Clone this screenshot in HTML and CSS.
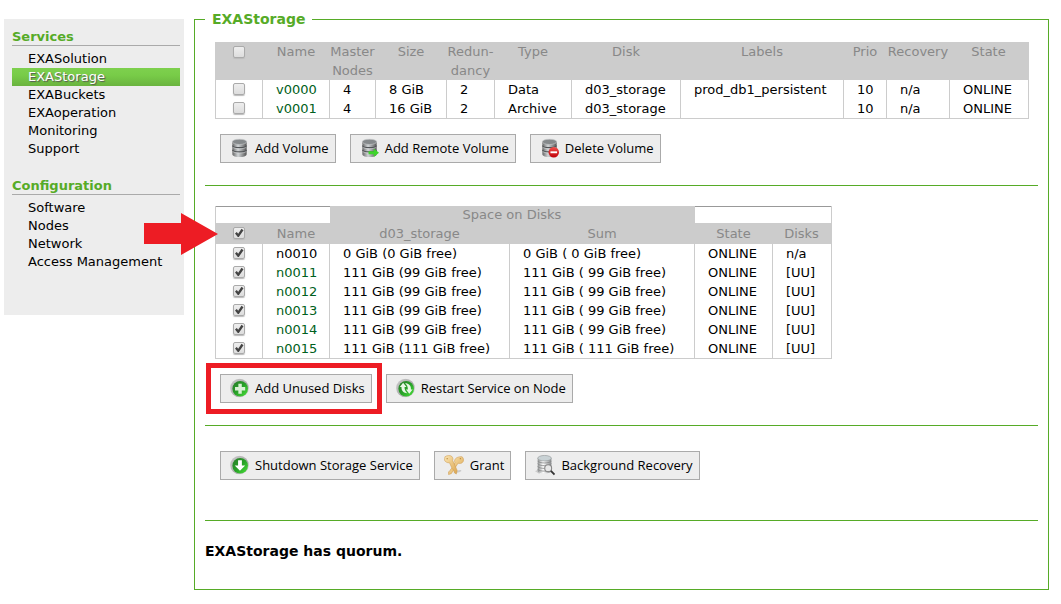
FILE: index.html
```html
<!DOCTYPE html>
<html lang="en">
<head>
<meta charset="utf-8">
<title>EXAStorage</title>
<link rel="stylesheet" href="styles.css">
</head>
<body>
<svg class="defs" aria-hidden="true">
  <defs>
    <linearGradient id="steel"><stop offset="0" stop-color="#666"/><stop offset=".4" stop-color="#d0d4d6"/><stop offset="1" stop-color="#555"/></linearGradient>
    <linearGradient id="pale"><stop offset="0" stop-color="#8c8f90"/><stop offset=".4" stop-color="#fff"/><stop offset="1" stop-color="#85888a"/></linearGradient>
    <linearGradient id="green" x2="1" y2="1"><stop offset="0" stop-color="#2b7a2b"/><stop offset=".5" stop-color="#27a027"/><stop offset="1" stop-color="#4be43a"/></linearGradient>
    <linearGradient id="ring" x2="1" y2="1"><stop offset="0" stop-color="#ccc"/><stop offset=".6" stop-color="#aaa"/><stop offset="1" stop-color="#ddd"/></linearGradient>
    <linearGradient id="red" x2="0" y2="1"><stop offset="0" stop-color="#f0504c"/><stop offset="1" stop-color="#c00008"/></linearGradient>
    <linearGradient id="gold" x2="1" y2="1"><stop offset="0" stop-color="#fbe6b4"/><stop offset="1" stop-color="#dba650"/></linearGradient>
    <symbol id="disks" viewBox="0 0 20 20">
      <path d="M2.500 3.500v13c0 4 15 4 15 0v-13z" fill="url(#steel)"/>
      <path d="M2.500 7.500c1 2.800 14 2.800 15 0M2.500 12c1 2.800 14 2.800 15 0" fill="none" stroke="#505356" stroke-width="1.300"/>
      <path d="M3 9c1 2.500 13 2.500 14 0M3 13.500c1 2.500 13 2.500 14 0" fill="none" stroke="#d5d7d8" stroke-width=".6"/>
      <ellipse cx="10" cy="3.500" rx="7.500" ry="2.800" fill="#85898b" stroke="#bfc2c3" stroke-width=".8"/>
    </symbol>
    <symbol id="orb" viewBox="0 0 20 20">
      <circle cx="10" cy="10" r="9.800" fill="url(#ring)"/>
      <circle cx="10.700" cy="10.700" r="8.200" fill="url(#green)"/>
    </symbol>
  </defs>
</svg>

<div class="page">
  <nav class="sidebar">
    <section class="menu">
      <h2>Services</h2>
      <a href="#">EXASolution</a>
      <a href="#" class="active" aria-current="page">EXAStorage</a>
      <a href="#">EXABuckets</a>
      <a href="#">EXAoperation</a>
      <a href="#">Monitoring</a>
      <a href="#">Support</a>
    </section>
    <section class="menu">
      <h2>Configuration</h2>
      <a href="#">Software</a>
      <a href="#">Nodes</a>
      <a href="#">Network</a>
      <a href="#">Access Management</a>
    </section>
  </nav>

  <main class="content">
    <fieldset class="panel">
      <legend>EXAStorage</legend>

      <div class="table-wrap">
        <table class="grid volumes">
          <colgroup><col class="c-check"><col class="c-name"><col class="c-master"><col class="c-size"><col class="c-red"><col class="c-type"><col class="c-disk"><col class="c-labels"><col class="c-prio"><col class="c-rec"><col class="c-state"></colgroup>
          <thead>
            <tr><th><input type="checkbox" aria-label="Select all volumes"></th><th>Name</th><th>Master Nodes</th><th>Size</th><th>Redun-<br>dancy</th><th>Type</th><th>Disk</th><th>Labels</th><th>Prio</th><th>Recovery</th><th>State</th></tr>
          </thead>
          <tbody>
            <tr><td class="check"><input type="checkbox" aria-label="Select v0000"></td><td><a href="#">v0000</a></td><td>4</td><td>8 GiB</td><td>2</td><td>Data</td><td>d03_storage</td><td>prod_db1_persistent</td><td>10</td><td>n/a</td><td>ONLINE</td></tr>
            <tr><td class="check"><input type="checkbox" aria-label="Select v0001"></td><td><a href="#">v0001</a></td><td>4</td><td>16 GiB</td><td>2</td><td>Archive</td><td>d03_storage</td><td></td><td>10</td><td>n/a</td><td>ONLINE</td></tr>
          </tbody>
        </table>
      </div>

      <div class="actions">
        <button type="button"><svg viewBox="0 0 20 20"><use href="#disks"/></svg>Add Volume</button>
        <button type="button"><svg viewBox="0 0 20 20"><use href="#disks"/><path d="M9 13.500h5.500v-3l5.500 4.500-5.500 4.500v-3H9z" fill="#3fd42c"/></svg>Add Remote Volume</button>
        <button type="button"><svg viewBox="0 0 20 20"><use href="#disks"/><circle cx="14.500" cy="14.500" r="5.500" fill="url(#red)"/><path d="M11 13.500h7v2h-7z" fill="#fff"/></svg>Delete Volume</button>
      </div>

      <hr>

      <div class="table-wrap">
        <table class="grid nodes">
          <colgroup><col class="c-check"><col class="c-name"><col class="c-space"><col class="c-sum"><col class="c-state"><col class="c-disks"></colgroup>
          <thead>
            <tr class="group"><th colspan="2" class="blank"></th><th colspan="2">Space on Disks</th><th colspan="2" class="blank"></th></tr>
            <tr><th><input type="checkbox" checked aria-label="Select all nodes"></th><th>Name</th><th>d03_storage</th><th>Sum</th><th>State</th><th>Disks</th></tr>
          </thead>
          <tbody>
            <tr><td class="check"><input type="checkbox" checked aria-label="Select n0010"></td><td>n0010</td><td>0 GiB (0 GiB free)</td><td>0 GiB ( 0 GiB free)</td><td>ONLINE</td><td>n/a</td></tr>
            <tr><td class="check"><input type="checkbox" checked aria-label="Select n0011"></td><td><a href="#">n0011</a></td><td>111 GiB (99 GiB free)</td><td>111 GiB ( 99 GiB free)</td><td>ONLINE</td><td>[UU]</td></tr>
            <tr><td class="check"><input type="checkbox" checked aria-label="Select n0012"></td><td><a href="#">n0012</a></td><td>111 GiB (99 GiB free)</td><td>111 GiB ( 99 GiB free)</td><td>ONLINE</td><td>[UU]</td></tr>
            <tr><td class="check"><input type="checkbox" checked aria-label="Select n0013"></td><td><a href="#">n0013</a></td><td>111 GiB (99 GiB free)</td><td>111 GiB ( 99 GiB free)</td><td>ONLINE</td><td>[UU]</td></tr>
            <tr><td class="check"><input type="checkbox" checked aria-label="Select n0014"></td><td><a href="#">n0014</a></td><td>111 GiB (99 GiB free)</td><td>111 GiB ( 99 GiB free)</td><td>ONLINE</td><td>[UU]</td></tr>
            <tr><td class="check"><input type="checkbox" checked aria-label="Select n0015"></td><td><a href="#">n0015</a></td><td>111 GiB (111 GiB free)</td><td>111 GiB ( 111 GiB free)</td><td>ONLINE</td><td>[UU]</td></tr>
          </tbody>
        </table>
        <svg class="pointer" viewBox="0 0 74 42" aria-hidden="true"><path d="M0 10h37V0l37 21-37 21V31H0z"/></svg>
      </div>

      <div class="actions">
        <span class="marked"><button type="button"><svg viewBox="0 0 20 20"><use href="#orb"/><path d="M8.800 5.500h3.600v3.400H16v3.600h-3.600V16H8.800v-3.500H5.300V8.900h3.500z" fill="#d9f0d5"/></svg>Add Unused Disks</button></span>
        <button type="button"><svg viewBox="0 0 20 20"><use href="#orb"/><path d="M4 9l3.500-4.500L11 9H9c0 3 1 5 3 6.500C8 15.500 5.500 13 5.800 9zM17.500 11.500L14 16l-3.500-4.500h2c0-3-1-5-3-6.500 4 0 6.500 2.500 6.200 6.500z" fill="#e9f7e6"/></svg>Restart Service on Node</button>
      </div>

      <hr>

      <div class="actions">
        <button type="button"><svg viewBox="0 0 20 20"><use href="#orb"/><path d="M8.500 5h4v5.500H16L10.500 16 5 10.500h3.500z" fill="#fff"/></svg>Shutdown Storage Service</button>
        <button type="button"><svg viewBox="0 0 22 22" class="wide"><path d="M10 20c4-3 8-4 9-3s-4 3-9 3z" fill="#ccc"/><path d="M20 2c2 2 2 5 0 6.500-1 1-3 1-4.500.5L8 20.500l-3 1v-3l1.500-1 1-2 1.500-1 3-6c-1-2 0-4.500 2-5.500s4.500-1.500 6-1z" fill="url(#gold)" stroke="#cf9c50" stroke-width=".6"/><path d="M1 2c2-1.500 6-2 7.500-.5 1.500 1.500 1.500 3 1 4.500l5 11-1 4-2-1.500-1-3-1.500-1.500L6 8.500C4 9 1 7.500.5 5.500z" fill="url(#gold)" stroke="#cf9c50" stroke-width=".6"/><circle cx="3.500" cy="4" r=".8" fill="#b98a40"/><circle cx="18" cy="4" r=".8" fill="#b98a40"/></svg>Grant</button>
        <button type="button"><svg viewBox="0 0 22 22" class="wide"><path d="M0 18l5-3v6z" fill="#ccc"/><path d="M3 3.500v14c0 3.500 15 3.500 15 0v-14z" fill="url(#pale)"/><path d="M3 6.500c1 3 14 3 15 0M3 9.500c1 3 14 3 15 0M3 12.500c1 3 14 3 15 0M3 15.500c1 3 14 3 15 0" fill="none" stroke="#888" stroke-width=".9"/><ellipse cx="10.500" cy="3.500" rx="7.500" ry="3" fill="#c9d2d5" stroke="#929698" stroke-width=".7"/><circle cx="14.500" cy="14.500" r="3.800" fill="#e8e8e8" stroke="#888" stroke-width="1.200"/><path d="M17.500 17.500l4 4" stroke="#333" stroke-width="2"/></svg>Background Recovery</button>
      </div>

      <hr class="spaced">

      <p class="status">EXAStorage has quorum.</p>
    </fieldset>
  </main>
</div>
</body>
</html>
```
FILE: styles.css
```css
* { box-sizing: border-box; }

body {
  margin: 0;
  background: #fff;
  color: #000;
  font: 13px/18px Verdana, "DejaVu Sans", sans-serif;
}

a { text-decoration: none; }

.defs { position: absolute; width: 0; height: 0; }

.page {
  display: flex;
  align-items: flex-start;
  gap: 10px;
  padding: 11px 12px 14px 4px;
}

.sidebar {
  flex: 0 0 180px;
  margin-top: 8px;
  padding: 10px 4px 44px 8px;
  background: #ededed;
}

.menu + .menu { margin-top: 20px; }

.menu h2 {
  margin: 0 0 4px;
  border-bottom: 1px solid #aaa;
  color: #56ab27;
  font-size: 13px;
  line-height: 16px;
}

.menu a {
  display: block;
  padding-left: 16px;
  color: #000;
}

.menu .active {
  background: linear-gradient(#7ed04e, #78cc48 40%, #6ab33f);
  color: #fff;
  text-shadow: 1px 1px 1px #555;
}

.content { flex: 1; min-width: 0; }

.panel {
  min-width: 0;
  margin: 0;
  padding: 14px 10px 29px;
  border: 1px solid #56ab27;
}

.panel legend {
  padding: 0 7px;
  color: #56ab27;
  font-size: 14px;
  font-weight: bold;
  line-height: 17px;
}

.table-wrap { position: relative; margin: 0 10px; }

.grid {
  table-layout: fixed;
  border-spacing: 0;
  border-right: 1px solid #ccc;
  border-left: 1px solid #ccc;
  border-bottom: 1px solid #ccc;
  line-height: 19px;
}

.volumes { width: 100%; }
.nodes { width: 617px; }

.c-check { width: 47px; }
.c-name { width: 67px; }
.c-master { width: 46px; }
.c-size { width: 71px; }
.c-red { width: 48px; }
.c-type { width: 77px; }
.c-disk { width: 109px; }
.c-labels { width: 163px; }
.c-prio { width: 43px; }
.c-rec { width: 63px; }
.c-state { width: 78px; }
.c-space { width: 180px; }
.c-sum { width: 185px; }
.c-disks { width: 58px; }

.grid th {
  padding: 0 1px 0 0;
  background: #ccc;
  color: #888;
  font-weight: normal;
  vertical-align: top;
}

.nodes th { height: 21px; line-height: 21px; }
.nodes .group th { height: 17px; line-height: 17px; }
.nodes .group .blank { background: #fff; border-top: 1px solid #999; }

.grid td {
  height: 19px;
  padding: 0 0 0 13px;
  border-right: 1px solid #ccc;
  white-space: nowrap;
}

.grid td:last-child { border-right: 0; }
.grid td.check { padding: 0; text-align: center; }
.grid td a { color: #006020; }

input[type="checkbox"] {
  appearance: none;
  display: block;
  width: 12px;
  height: 12px;
  margin: 3px auto 4px;
  border: 1px solid #aaa;
  border-radius: 2px;
  background: linear-gradient(#eee, #ddd);
  box-shadow: 0 1px 1px #bbb;
}

.grid th input[type="checkbox"] { margin-top: 4px; }

input[type="checkbox"]:checked::before {
  content: "";
  display: block;
  width: 10px;
  height: 10px;
  background: #444;
  clip-path: polygon(10% 55%, 28% 40%, 42% 58%, 75% 8%, 95% 22%, 48% 90%, 38% 90%);
}

.actions {
  display: flex;
  flex-wrap: wrap;
  gap: 14px;
  margin: 15px 15px 22px;
}

button {
  display: flex;
  align-items: center;
  gap: 6px;
  height: 29px;
  padding: 0 6px 1px 9px;
  border: 1px solid #aaa;
  background: #ededed;
  color: #000;
  font: 13px/18px "Open Sans", sans-serif;
  white-space: nowrap;
}

button svg { width: 19px; height: 20px; }
button .wide { width: 20px; height: 22px; }

.marked { position: relative; }

.marked::after {
  content: "";
  position: absolute;
  inset: -11px -10px -11px -14px;
  border: 5px solid #ed1c24;
  pointer-events: none;
}

.pointer {
  position: absolute;
  top: 7px;
  left: -71px;
  width: 74px;
  height: 42px;
  fill: #ed1c24;
}

hr {
  height: 1px;
  margin: 0 0 20px;
  border: 0;
  background: #56ab27;
}

hr + .actions { margin-top: 25px; }

hr.spaced { margin-top: 40px; }

.status {
  margin: 0;
  padding-top: 1px;
  font-size: 14px;
  font-weight: bold;
  line-height: 18px;
}
```
